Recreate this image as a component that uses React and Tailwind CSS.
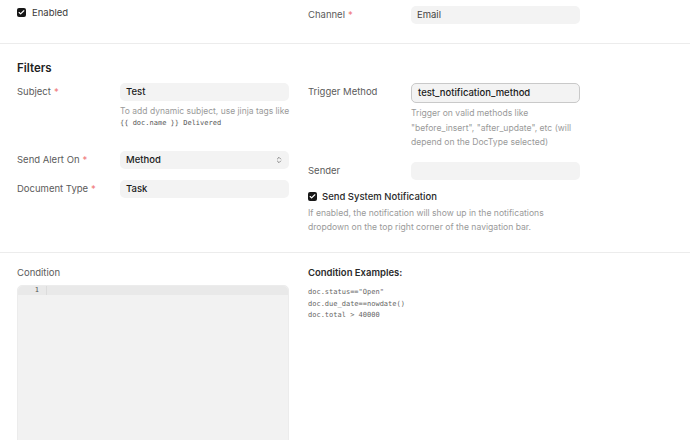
import { Check, ChevronsUpDown } from "lucide-react";

const font = { fontFamily: "Inter, 'Noto Sans', sans-serif" };
const mono = { fontFamily: "'DejaVu Sans Mono', monospace" };

function Req() {
  return <span className="text-[#f07a7a] ml-[3px]">*</span>;
}

function Box() {
  return (
    <span className="w-[9px] h-[9px] rounded-[2px] bg-[#171717] flex items-center justify-center shrink-0">
      <Check size={7} strokeWidth={4} className="text-white" />
    </span>
  );
}

function Label({ children, required }) {
  return (
    <div className="text-[9.5px] text-[#5b5b5b] leading-[18px]">
      {children}
      {required && <Req />}
    </div>
  );
}

function Input({ value, focused, select }) {
  return (
    <div
      className={
        "h-[18px] rounded-[5px] bg-[#f3f3f3] flex items-center justify-between px-[6px] text-[9.5px] font-medium text-[#1a1a1a] " +
        (focused ? "border border-[#c9c9c9] h-[20px]" : "")
      }
    >
      <span>{value}</span>
      {select && <ChevronsUpDown size={8} className="text-[#555]" />}
    </div>
  );
}

function Field({ label, required, value, focused, select, help, className }) {
  return (
    <div className={"grid grid-cols-[103px_169px] " + (className || "")}>
      <Label required={required}>{label}</Label>
      <div>
        <Input value={value} focused={focused} select={select} />
        {help}
      </div>
    </div>
  );
}

export default function App() {
  return (
    <div className="w-[690px] h-[440px] overflow-hidden bg-white" style={font}>
      {/* top section */}
      <div className="h-[44px] border-b border-[#ececec] pl-[17px] flex gap-[19px] pt-[6px]">
        <div className="w-[272px] flex items-start gap-[6px] pt-[2px]">
          <Box />
          <span className="text-[9.5px] text-[#3a3a3a] leading-[10px]">Enabled</span>
        </div>
        <Field label="Channel" required value={<span className="font-normal text-[#444]">Email</span>} />
      </div>

      {/* filters */}
      <div className="h-[209px] border-b border-[#ececec] pl-[17px]">
        <div className="text-[11.5px] font-semibold text-[#1f1f1f] pt-[16px] leading-[16px]">Filters</div>
        <div className="flex gap-[19px] mt-[7px]">
          <div className="w-[272px]">
            <Field
              label="Subject"
              required
              value="Test"
              help={
                <div className="mt-[3px]">
                  <div className="text-[8.5px] text-[#9a9a9a] leading-[14px] whitespace-nowrap">
                    To add dynamic subject, use jinja tags like
                  </div>
                  <div className="text-[7px] text-[#555] leading-[10px]" style={mono}>
                    {"{{ doc.name }} Delivered"}
                  </div>
                </div>
              }
            />
            <Field className="mt-[23px]" label="Send Alert On" required value="Method" select />
            <Field className="mt-[11px]" label="Document Type" required value="Task" />
          </div>
          <div className="w-[272px]">
            <Field
              label="Trigger Method"
              value="test_notification_method"
              focused
              help={
                <div className="mt-[3px] text-[8.6px] text-[#9a9a9a] leading-[14.5px] pr-[2px]">
                  Trigger on valid methods like "before_insert", "after_update", etc (will depend on the DocType selected)
                </div>
              }
            />
            <Field className="mt-[12px]" label="Sender" value="" />
            <div className="flex items-center gap-[5px] mt-[11px]">
              <Box />
              <span className="text-[9.5px] font-medium text-[#2a2a2a] leading-[12px]">Send System Notification</span>
            </div>
            <div className="mt-[3px] text-[8.6px] text-[#9a9a9a] leading-[14px] w-[265px]">
              If enabled, the notification will show up in the notifications dropdown on the top right corner of the navigation bar.
            </div>
          </div>
        </div>
      </div>

      {/* condition */}
      <div className="pl-[17px] flex gap-[19px] pt-[14px]">
        <div className="w-[272px]">
          <div className="text-[9.5px] text-[#5b5b5b] leading-[12px]">Condition</div>
          <div className="mt-[6px] h-[200px] rounded-t-[5px] bg-[#f2f2f2] border border-[#ececec]">
            <div className="h-[9px] bg-[#e9e9e9] flex rounded-t-[5px]">
              <div className="w-[28px] text-right text-[7px] leading-[9px] text-[#555] pr-[7px]" style={mono}>
                1
              </div>
              <div className="border-l border-[#dcdcdc]" />
            </div>
          </div>
        </div>
        <div>
          <div className="text-[9.5px] font-semibold text-[#2a2a2a] leading-[12px]">Condition Examples:</div>
          <div className="mt-[8px] text-[7px] text-[#666] leading-[11.5px]" style={mono}>
            <div>doc.status=="Open"</div>
            <div>doc.due_date==nowdate()</div>
            <div>doc.total &gt; 40000</div>
          </div>
        </div>
      </div>
    </div>
  );
}
